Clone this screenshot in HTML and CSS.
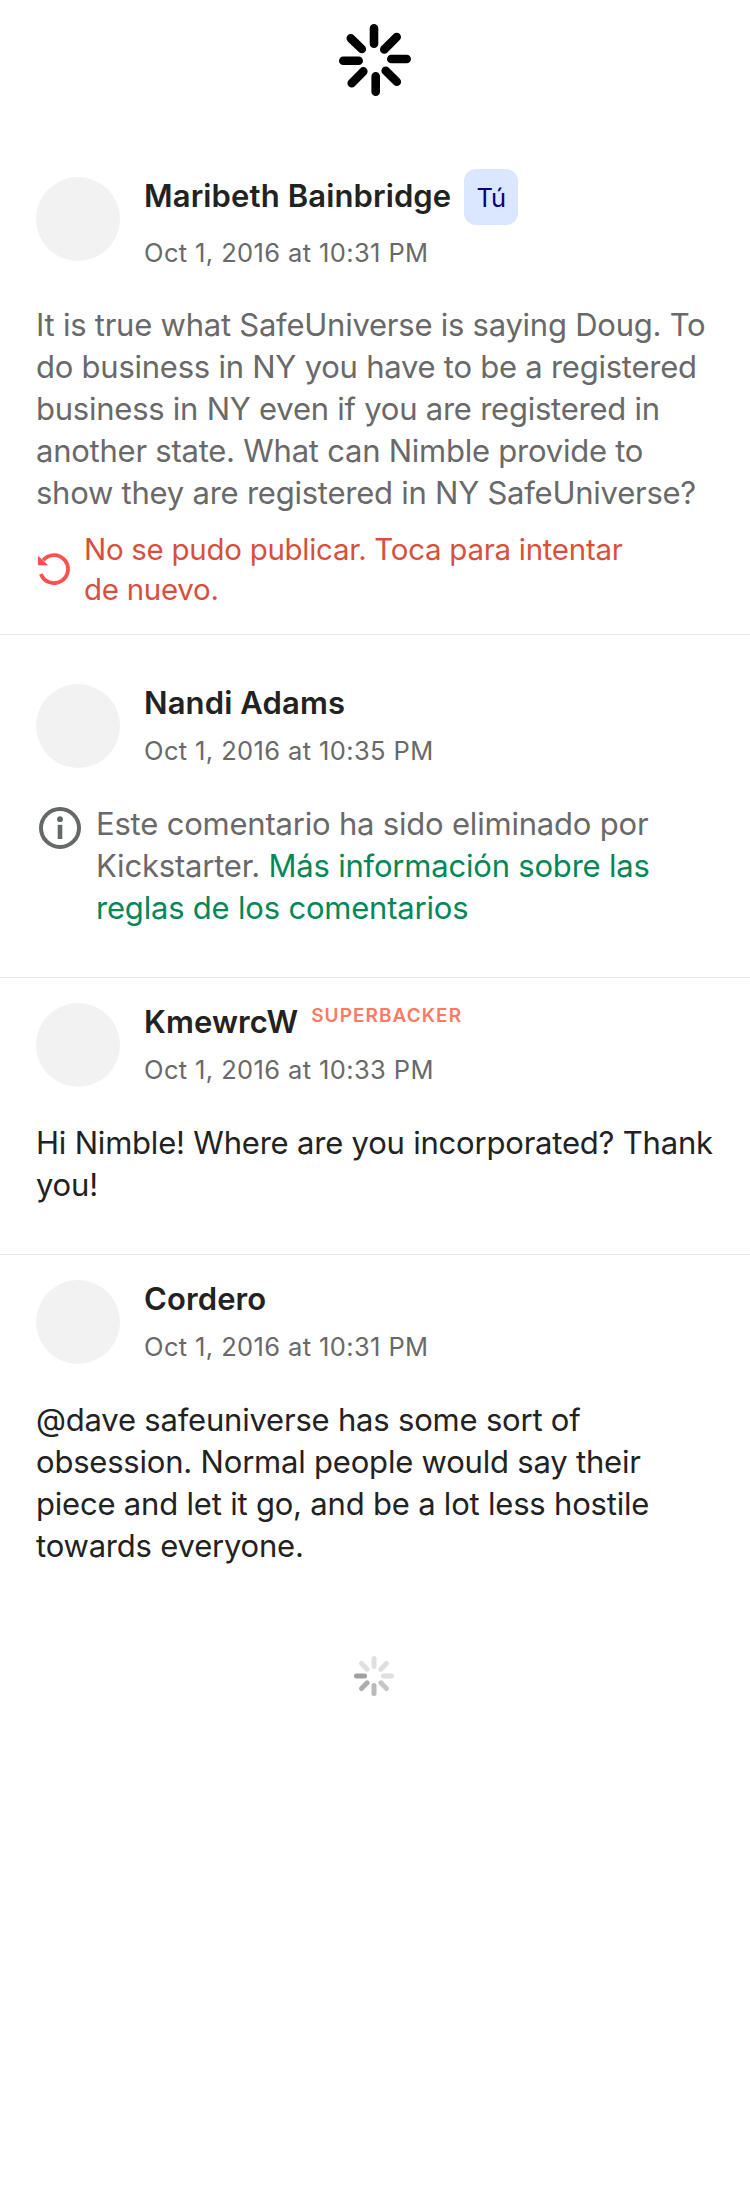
FILE: index.html
```html
<!DOCTYPE html>
<html lang="es">
<head>
<meta charset="utf-8">
<title>Comentarios</title>
<link rel="stylesheet" href="styles.css">
</head>
<body>
<main class="comments">
  <div class="loader loader-top">
    <svg class="spinner-large" viewBox="0 0 72 72" fill="none" stroke="#000" stroke-width="8.6" stroke-linecap="round">
      <path d="M35 4.3V19.7M57.7 13 45.3 25.4M67.7 35H52.3M57.8 57.8 46.7 46.7M36.7 67.7V52.3M12.7 59.2 24.3 47.4M4.3 36.7H19.7M11.8 14.3 22.8 25"/>
    </svg>
  </div>

  <article class="comment comment-failed">
    <header class="author">
      <div class="avatar"></div>
      <div class="meta">
        <div class="name-row"><h2 class="name">Maribeth Bainbridge</h2><span class="you-badge">Tú</span></div>
        <time class="date">Oct 1, 2016 at 10:31 PM</time>
      </div>
    </header>
    <p class="body muted">It is true what SafeUniverse is saying Doug. To<br>do business in NY you have to be a registered<br>business in NY even if you are registered in<br>another state. What can Nimble provide to<br>show they are registered in NY SafeUniverse?</p>
    <div class="retry">
      <svg class="retry-icon" viewBox="0 0 32 32" fill="none">
        <path d="M5.2 7.2A14 14 0 1 1 2.9 21" stroke="#ff5050" stroke-width="3.8"/>
        <path d="M0 2.7 10.2 12.2H0Z" fill="#ff5050"/>
      </svg>
      <p class="retry-text">No se pudo publicar. Toca para intentar<br>de nuevo.</p>
    </div>
  </article>

  <article class="comment comment-removed">
    <header class="author">
      <div class="avatar"></div>
      <div class="meta">
        <div class="name-row"><h2 class="name">Nandi Adams</h2></div>
        <time class="date">Oct 1, 2016 at 10:35 PM</time>
      </div>
    </header>
    <div class="removed">
      <svg class="info-icon" viewBox="0 0 42 42">
        <circle cx="21" cy="21" r="19" fill="none" stroke="#656868" stroke-width="4"/>
        <circle cx="21" cy="12.2" r="2.9" fill="#656868"/>
        <path d="M18.7 17.8H23.3V32H18.7Z" fill="#656868"/>
      </svg>
      <p class="body muted">Este comentario ha sido eliminado por<br>Kickstarter. <a class="rules">Más información sobre las<br>reglas de los comentarios</a></p>
    </div>
  </article>

  <article class="comment">
    <header class="author">
      <div class="avatar"></div>
      <div class="meta">
        <div class="name-row"><h2 class="name">KmewrcW</h2><span class="superbacker">SUPERBACKER</span></div>
        <time class="date">Oct 1, 2016 at 10:33 PM</time>
      </div>
    </header>
    <p class="body">Hi Nimble! Where are you incorporated? Thank<br>you!</p>
  </article>

  <article class="comment comment-last">
    <header class="author">
      <div class="avatar"></div>
      <div class="meta">
        <div class="name-row"><h2 class="name">Cordero</h2></div>
        <time class="date">Oct 1, 2016 at 10:31 PM</time>
      </div>
    </header>
    <p class="body">@dave safeuniverse has some sort of<br>obsession. Normal people would say their<br>piece and let it go, and be a lot less hostile<br>towards everyone.</p>
  </article>

  <div class="loader loader-bottom">
    <svg class="spinner-small" viewBox="0 0 40 40" fill="none" stroke="#dfdfdf" stroke-width="5" stroke-linecap="round">
      <path d="M20 2.5V10.5M32.5 7.5 26.8 13.2M37.5 20H29.5M7.5 7.5 13.2 13.2"/>
      <path d="M32.5 32.5 26.8 26.8" stroke="#c6c6c6"/>
      <path d="M20 37.5V29.5" stroke="#bababa"/>
      <path d="M7.5 32.5 13.2 26.8" stroke="#adadad"/>
      <path d="M2.5 20H10.5" stroke="#a0a0a0"/>
    </svg>
  </div>
</main>
</body>
</html>
```
FILE: styles.css
```css
* { box-sizing: border-box; }
body {
  margin: 0;
  background: #fff;
  color: #222;
  font-family: Inter, "Liberation Sans", sans-serif;
}
.comments { width: 750px; min-height: 2200px; }
.loader { display: flex; justify-content: center; }
.loader-top { height: 151px; padding-top: 24px; }
.spinner-large { width: 72px; height: 72px; }
.loader-bottom { padding-top: 93px; padding-right: 2px; }
.spinner-small { width: 40px; height: 40px; }

.comment { height: 277px; padding: 25px 36px 0; border-bottom: 1px solid #e6e6e6; }
.comment-failed { height: 484px; padding-top: 18px; }
.comment-removed { height: 343px; padding-top: 49px; }
.comment-last { height: 308px; border-bottom: 0; }

.author { display: flex; gap: 24px; height: 119px; }
.avatar { width: 84px; height: 84px; border-radius: 50%; background: #f2f2f2; }
.meta { display: flex; flex-direction: column; gap: 13px; margin-top: -2px; }
.name-row { display: flex; gap: 13px; height: 40px; }
.name { margin: 0; font-size: 31px; line-height: 42px; font-weight: 600; letter-spacing: 0.12px; white-space: nowrap; }
.date { font-size: 25.5px; line-height: 32px; letter-spacing: 0.38px; color: #696969; white-space: nowrap; }
.superbacker { padding-top: 2px; font-size: 19px; line-height: 26px; font-weight: 600; letter-spacing: 1.05px; color: #ff7a64; }
.you-badge {
  display: flex; align-items: center; justify-content: center;
  width: 54px; height: 56px;
  border-radius: 12px; background: #dbe7ff; color: #0a007d; font-size: 25.5px;
}
.comment-failed .author { height: 135px; }
.comment-failed .avatar { margin-top: 8px; }
.comment-failed .meta { margin-top: 0; gap: 12px; }
.comment-failed .name-row { height: 56px; }
.comment-failed .name { padding-top: 6px; }

.body { margin: 0; font-size: 31px; line-height: 42px; letter-spacing: -0.2px; white-space: nowrap; }
.comment-failed .body { letter-spacing: -0.24px; }
.muted { color: #696969; }
.rules { color: #028858; }
.retry { display: flex; gap: 14px; padding: 15px 0 0 2px; }
.retry-icon { width: 32px; height: 32px; margin-top: 24px; flex: none; }
.retry-text { margin: 0; font-size: 29.5px; line-height: 40px; letter-spacing: -0.29px; color: #d8503d; white-space: nowrap; }
.removed { display: flex; gap: 15px; padding-left: 3px; }
.info-icon { width: 42px; height: 42px; margin-top: 4px; flex: none; }
```
